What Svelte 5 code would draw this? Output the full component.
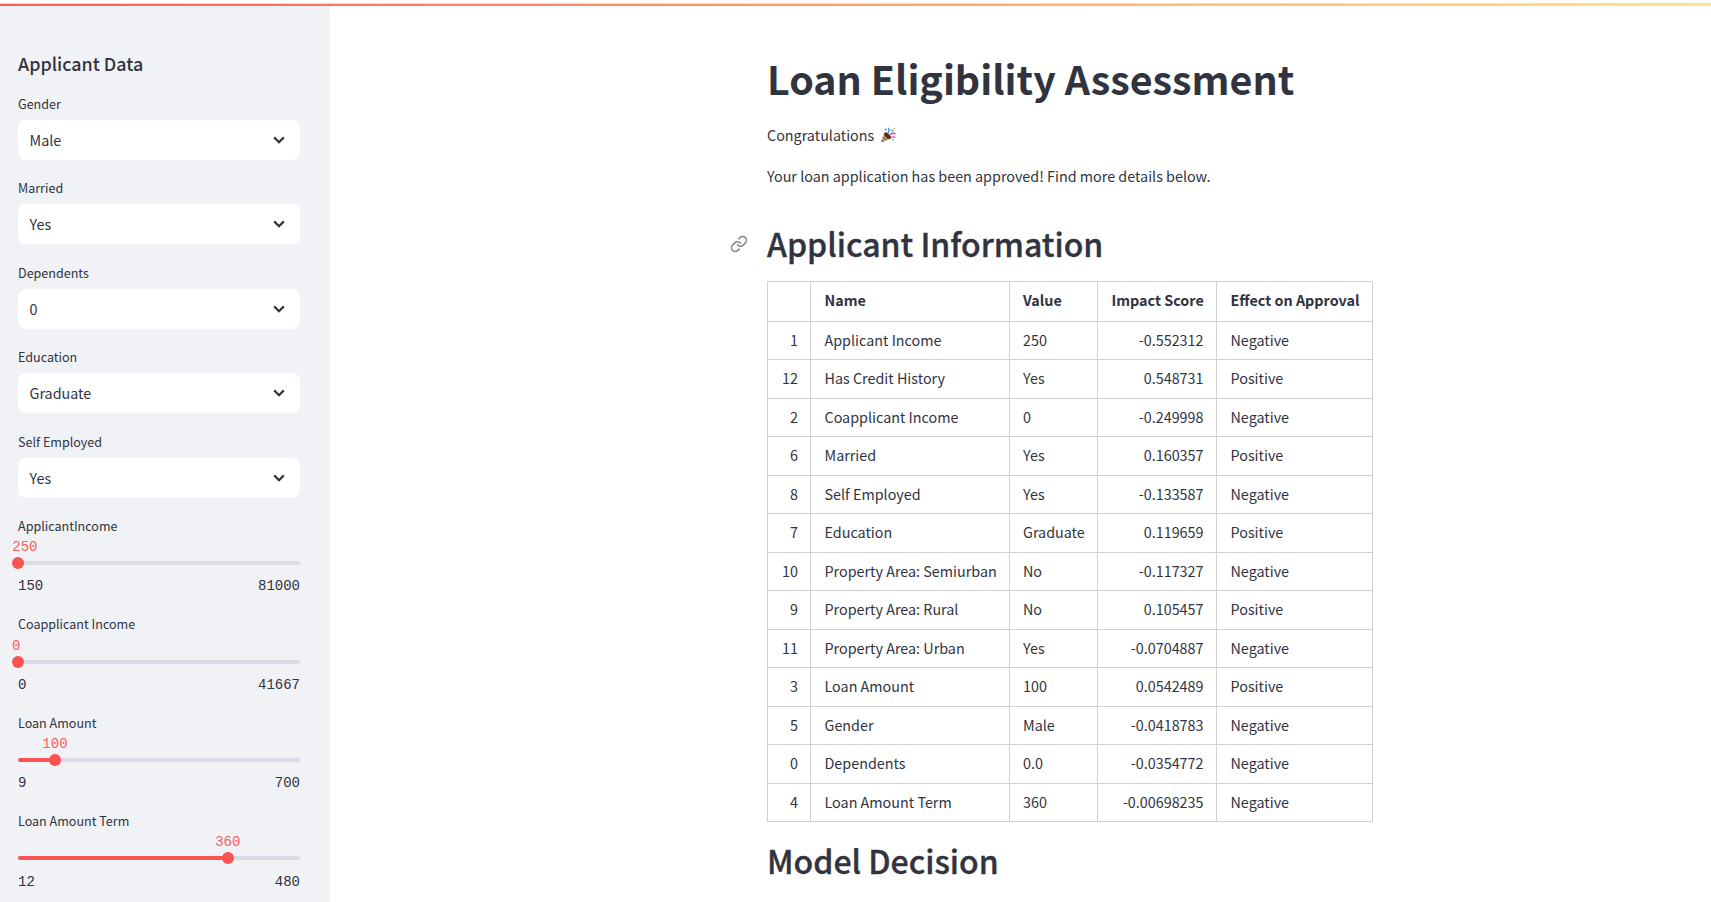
<script>
  const selects = [
    ['Gender', 'Male'],
    ['Married', 'Yes'],
    ['Dependents', '0'],
    ['Education', 'Graduate'],
    ['Self Employed', 'Yes']
  ];
  const sliders = [
    { label: 'ApplicantIncome', value: '250', min: '150', max: '81000', pos: 0.1, clamp: true },
    { label: 'Coapplicant Income', value: '0', min: '0', max: '41667', pos: 0, clamp: true },
    { label: 'Loan Amount', value: '100', min: '9', max: '700', pos: 13.1, clamp: false },
    { label: 'Loan Amount Term', value: '360', min: '12', max: '480', pos: 74.4, clamp: false }
  ];
  const rows = [
    ['1', 'Applicant Income', '250', '-0.552312', 'Negative'],
    ['12', 'Has Credit History', 'Yes', '0.548731', 'Positive'],
    ['2', 'Coapplicant Income', '0', '-0.249998', 'Negative'],
    ['6', 'Married', 'Yes', '0.160357', 'Positive'],
    ['8', 'Self Employed', 'Yes', '-0.133587', 'Negative'],
    ['7', 'Education', 'Graduate', '0.119659', 'Positive'],
    ['10', 'Property Area: Semiurban', 'No', '-0.117327', 'Negative'],
    ['9', 'Property Area: Rural', 'No', '0.105457', 'Positive'],
    ['11', 'Property Area: Urban', 'Yes', '-0.0704887', 'Negative'],
    ['3', 'Loan Amount', '100', '0.0542489', 'Positive'],
    ['5', 'Gender', 'Male', '-0.0418783', 'Negative'],
    ['0', 'Dependents', '0.0', '-0.0354772', 'Negative'],
    ['4', 'Loan Amount Term', '360', '-0.00698235', 'Negative']
  ];
</script>

<div class="page">
  <div class="topbar"></div>
  <div class="body">
    <aside class="sidebar">
      <h2 class="side-title">Applicant Data</h2>
      {#each selects as s}
        <div class="field">
          <div class="label">{s[0]}</div>
          <div class="select">
            <span>{s[1]}</span>
            <svg class="chev" viewBox="0 0 20 20" width="20" height="20" fill="none" stroke="#31333f" stroke-width="2.2"><path d="M5.2 7.4l4.8 4.8 4.8-4.8" /></svg>
          </div>
        </div>
      {/each}
      {#each sliders as s}
        <div class="slider">
          <div class="label">{s.label}</div>
          <div class="track">
            <div class="fill" style="width:{s.pos}%"></div>
            <div class="thumb" style="left:{s.pos}%">
              <span class="val" class:clamp={s.clamp}>{s.value}</span>
            </div>
          </div>
          <div class="ticks"><span>{s.min}</span><span>{s.max}</span></div>
        </div>
      {/each}
    </aside>
    <main class="main">
      <div class="content">
        <h1>Loan Eligibility Assessment</h1>
        <p class="p1">Congratulations
          <svg class="emoji" viewBox="0 0 16 16" width="16" height="16">
            <path d="M0.6 15.6 L4.6 5.6 L10.6 11.4Z" fill="#e9a93f" />
            <path d="M1.7 12.8 L3.6 14.8 M2.9 9.8 L6.4 13.4 M3.9 7.4 L8.4 12.4" stroke="#6a4aa0" stroke-width="1.1" />
            <ellipse cx="7.7" cy="8.6" rx="1.9" ry="4.2" transform="rotate(-45 7.7 8.6)" fill="#4a2f24" />
            <path d="M8.2 6.2 Q9.6 3.6 8.4 0.8" stroke="#2fa8e0" stroke-width="1.4" fill="none" />
            <path d="M10 7.6 Q13 5.4 15.6 7" stroke="#ea3a96" stroke-width="1.4" fill="none" />
            <path d="M11 2.4 L13.2 4.6" stroke="#2fa8e0" stroke-width="1.3" />
            <path d="M11 10 L15.4 10.2" stroke="#ea3a96" stroke-width="1.2" />
            <circle cx="5.6" cy="2.4" r="1" fill="#ea3a96" /><circle cx="14" cy="2" r="0.9" fill="#f2c12e" /><circle cx="13" cy="12.6" r="0.8" fill="#2fa8e0" />
          </svg>
        </p>
        <p class="p2">Your loan application has been approved! Find more details below.</p>
        <h2 class="h2-link">
          <svg class="link" viewBox="0 0 24 24" width="18" height="18" fill="none" stroke="#808495" stroke-width="2" stroke-linecap="round" stroke-linejoin="round"><path d="M10 13a5 5 0 0 0 7.54.54l3-3a5 5 0 0 0-7.07-7.07l-1.72 1.71" /><path d="M14 11a5 5 0 0 0-7.54-.54l-3 3a5 5 0 0 0 7.07 7.07l1.71-1.71" /></svg>
          Applicant Information
        </h2>
        <table>
          <thead>
            <tr>
              <th class="idx"></th><th class="c-name">Name</th><th class="c-val">Value</th><th class="num c-imp">Impact Score</th><th class="c-eff">Effect on Approval</th>
            </tr>
          </thead>
          <tbody>
            {#each rows as r}
              <tr>
                <td class="idx">{r[0]}</td><td>{r[1]}</td><td>{r[2]}</td><td class="num">{r[3]}</td><td>{r[4]}</td>
              </tr>
            {/each}
          </tbody>
        </table>
        <h2 class="h2-model">Model Decision</h2>
      </div>
    </main>
  </div>
</div>

<style>
  :global(body) {
    margin: 0;
    background: #fff;
    overflow: hidden;
  }
  .page {
    width: 1711px;
    height: 902px;
    overflow: hidden;
    position: relative;
    font-family: "Noto Sans CJK SC", "Noto Sans", sans-serif;
    color: #31333f;
    font-size: 14.35px;
    line-height: 24px;
  }
  .topbar {
    position: absolute;
    top: 3px;
    left: 0;
    right: 0;
    height: 2px;
    border-top: 1px solid #ecdccb;
    background: linear-gradient(90deg, #ff5c52, #ffe680);
    z-index: 2;
  }
  .body {
    display: flex;
    height: 896px;
    margin-top: 6px;
  }
  .sidebar {
    width: 330px;
    flex: none;
    box-sizing: border-box;
    background: #f0f2f6;
    padding: 44px 30px 0 18px;
    height: 896px;
    overflow: hidden;
  }
  .side-title {
    margin: 0 0 17px;
    font-size: 17.9px;
    line-height: 27px;
    font-weight: 500;
  }
  .field {
    margin-bottom: 18.4px;
  }
  .label {
    font-size: 12.55px;
    line-height: 20px;
    height: 20px;
    color: #31333f;
  }
  .field .label { margin-bottom: 6px; }
  .select {
    height: 40px;
    background: #fff;
    border-radius: 8px;
    display: flex;
    align-items: center;
    justify-content: space-between;
    padding: 0 11.5px;
  }
  .chev { display: block; }
  .slider {
    height: 98.4px;
  }
  .track {
    position: relative;
    height: 4px;
    background: #d9dce6;
    border-radius: 4px;
    margin-top: 25.2px;
  }
  .fill {
    position: absolute;
    left: 0; top: 0; bottom: 0;
    background: #fb5252;
    border-radius: 4px;
  }
  .thumb {
    position: absolute;
    top: 50%;
    width: 12px;
    height: 12px;
    border-radius: 50%;
    background: #fb5252;
    transform: translate(-50%, -50%);
  }
  .val {
    position: absolute;
    bottom: 12px;
    left: 50%;
    transform: translateX(-50%);
    font-family: "Liberation Mono", monospace;
    font-size: 14px;
    line-height: 20px;
    color: #ff5c5c;
  }
  .val.clamp {
    left: 0;
    transform: none;
  }
  .ticks {
    display: flex;
    justify-content: space-between;
    font-family: "Liberation Mono", monospace;
    font-size: 14px;
    line-height: 20px;
    margin-top: 11.3px;
  }
  .main {
    flex: 1;
    min-width: 0;
  }
  .content {
    margin-left: 437px;
    width: 740px;
  }
  h1 {
    margin: 0;
    padding-top: 40px;
    font-size: 39.4px;
    line-height: 64px;
    font-weight: 700;
  }
  .p1 {
    margin: 0;
    padding-top: 13.3px;
    display: flex;
    align-items: center;
    gap: 6px;
  }
  .p2 { margin: 17px 0 0; }
  h2 {
    font-weight: 500;
  }
  .h2-link, .h2-model {
    -webkit-text-stroke: 0.35px #31333f;
  }
  .h2-link {
    position: relative;
    margin: 30.3px 0 0;
    font-size: 32px;
    line-height: 48px;
  }
  .link {
    position: absolute;
    left: -37px;
    top: 16px;
  }
  table {
    border-collapse: collapse;
    margin-top: 14.9px;
    table-layout: fixed;
    width: 605px;
  }
  th, td {
    border: 1px solid #d0d0d3;
    padding: 0 12.5px 2px 13.5px;
    height: 38.5px;
    box-sizing: border-box;
    text-align: left;
    font-weight: 400;
    white-space: nowrap;
  }
  th {
    font-weight: 600;
    height: 39.3px;
    padding-bottom: 4px;
  }
  .num, .idx { text-align: right; }
  th.num { text-align: right; }
  .idx { width: 43px; padding-right: 12px; }
  .c-name { width: 198.5px; }
  .c-val { width: 88.5px; }
  .c-imp { width: 119px; }
  .c-eff { width: 156px; }
  .h2-model {
    margin: 13.7px 0 0;
    font-size: 32px;
    line-height: 48px;
  }
</style>
